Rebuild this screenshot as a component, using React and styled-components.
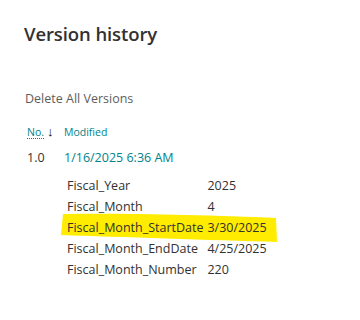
import React from 'react';
import styled, { createGlobalStyle } from 'styled-components';

const GlobalStyle = createGlobalStyle`
    body {
        margin: 0;
        background: #ffffff;
        font-family: "Open Sans", "Noto Sans", sans-serif;
    }
`;

const Panel = styled.div`
    width: 360px;
    height: 320px;
    box-sizing: border-box;
    padding: 20px 0 0 24px;
    position: relative;
    isolation: isolate;
`;

const Title = styled.h1`
    margin: 0;
    font-size: 18.5px;
    font-weight: 600;
    line-height: 28px;
    color: #323130;
    letter-spacing: -0.1px;
`;

const Action = styled.div`
    margin-top: 42px;
    margin-left: 1px;
    font-size: 12.5px;
    line-height: 18px;
    color: #605e5c;
`;

const Header = styled.div`
    display: flex;
    align-items: center;
    margin-top: 16px;
    margin-left: 3px;
    font-size: 10.5px;
    line-height: 16px;
    color: #00838a;
`;

const NoCol = styled.div`
    width: 37px;
    display: flex;
    align-items: center;
    gap: 3px;
`;

const Abbr = styled.span`
    border-bottom: 1px dotted #00838a;
    line-height: 12px;
`;

const Arrow = styled.span`
    color: #000000;
    font-size: 13px;
    line-height: 14px;
    margin-top: -3px;
`;

const VersionRow = styled.div`
    display: flex;
    margin-top: 9px;
    margin-left: 3px;
    font-size: 12.5px;
    line-height: 18px;
`;

const VersionNo = styled.span`
    width: 37px;
    color: #323130;
`;

const Stamp = styled.span`
    color: #00838a;
`;

const Fields = styled.div`
    position: relative;
    display: grid;
    grid-template-columns: max-content max-content;
    column-gap: 4px;
    row-gap: 3px;
    margin-top: 10px;
    margin-left: 43px;
    font-size: 12.5px;
    line-height: 18px;
    color: #323130;
`;

const Marker = styled.svg`
    position: absolute;
    left: -7px;
    top: 35px;
    width: 220px;
    height: 34px;
    z-index: -1;
`;

const fields = [
    ['Fiscal_Year', '2025'],
    ['Fiscal_Month', '4'],
    ['Fiscal_Month_StartDate', '3/30/2025'],
    ['Fiscal_Month_EndDate', '4/25/2025'],
    ['Fiscal_Month_Number', '220'],
];

const App = () => {
    return (
        <Panel>
            <GlobalStyle />
            <Title>Version history</Title>
            <Action>Delete All Versions</Action>
            <Header>
                <NoCol>
                    <Abbr>No.</Abbr>
                    <Arrow>↓</Arrow>
                </NoCol>
                <span>Modified</span>
            </Header>
            <VersionRow>
                <VersionNo>1.0</VersionNo>
                <Stamp>1/16/2025 6:36 AM</Stamp>
            </VersionRow>
            <Fields>
                <Marker viewBox="0 0 220 34">
                    <path d="M3 2 C 60 1, 150 3, 216 6 L 217 30 C 150 28, 60 25, 1 23 Z" fill="#ffec00" />
                </Marker>
                {fields.map(([name, value]) => (
                    <React.Fragment key={name}>
                        <span>{name}</span>
                        <span>{value}</span>
                    </React.Fragment>
                ))}
            </Fields>
        </Panel>
    );
};

export default App;
